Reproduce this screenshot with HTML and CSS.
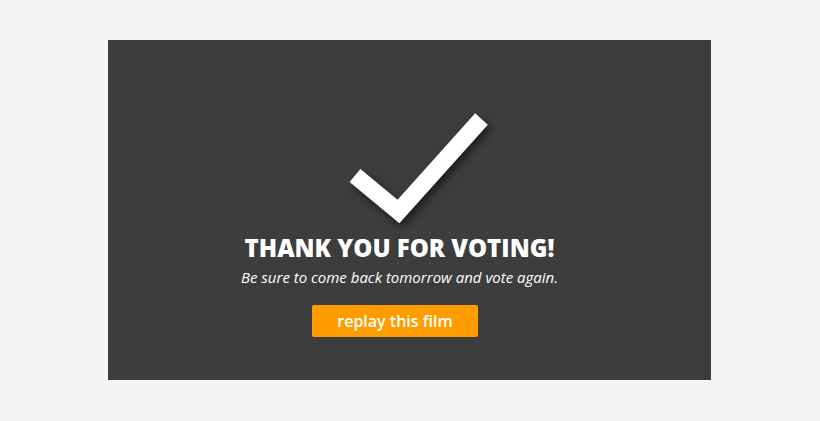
FILE: index.html
```html
<!DOCTYPE html>
<html lang="en">
<head>
    <meta charset="UTF-8">
    <title>Thank you for voting</title>
    <link rel="stylesheet" href="styles.css">
</head>
<body>
    <div class="page">
        <div class="panel">
            <svg class="check" width="150" height="125" viewBox="324.5 105 150 125">
                <path d="M354.5 175.5 L398 211.5 L481 119" />
            </svg>
            <h1 class="title">THANK YOU FOR VOTING!</h1>
            <p class="subtitle">Be sure to come back tomorrow and vote again.</p>
            <button class="replay">replay this film</button>
        </div>
    </div>
</body>
</html>
```

FILE: styles.css
```css
body {
    margin: 0;
    background-color: #f5f5f5;
    font-family: "Open Sans", Arial, sans-serif;
}

.page {
    padding: 40px 0 0 108px;
}

.panel {
    width: 583px;
    height: 275px;
    padding: 65px 20px 0 0;
    background-color: #3d3d3d;
    display: flex;
    flex-direction: column;
    align-items: center;
}

.check {
    display: block;
    overflow: visible;
    filter: drop-shadow(3px 4px 4px rgba(0, 0, 0, 0.55));
}

.check path {
    fill: none;
    stroke: #fff;
    stroke-width: 17;
    stroke-linejoin: miter;
    stroke-linecap: butt;
}

.title {
    margin: 3px 0 0;
    color: #fff;
    font-size: 24px;
    line-height: 30px;
    font-weight: 800;
}

.subtitle {
    margin: 4px 0 0;
    color: #fff;
    font-size: 15px;
    line-height: 20px;
    font-style: italic;
}

.replay {
    margin: 18px 9px 0 0;
    width: 166px;
    height: 32px;
    border: none;
    border-radius: 2px;
    background-color: #ff9c00;
    color: #fff;
    font-family: "Open Sans", Arial, sans-serif;
    font-size: 16px;
    font-weight: 600;
    cursor: pointer;
}
```
